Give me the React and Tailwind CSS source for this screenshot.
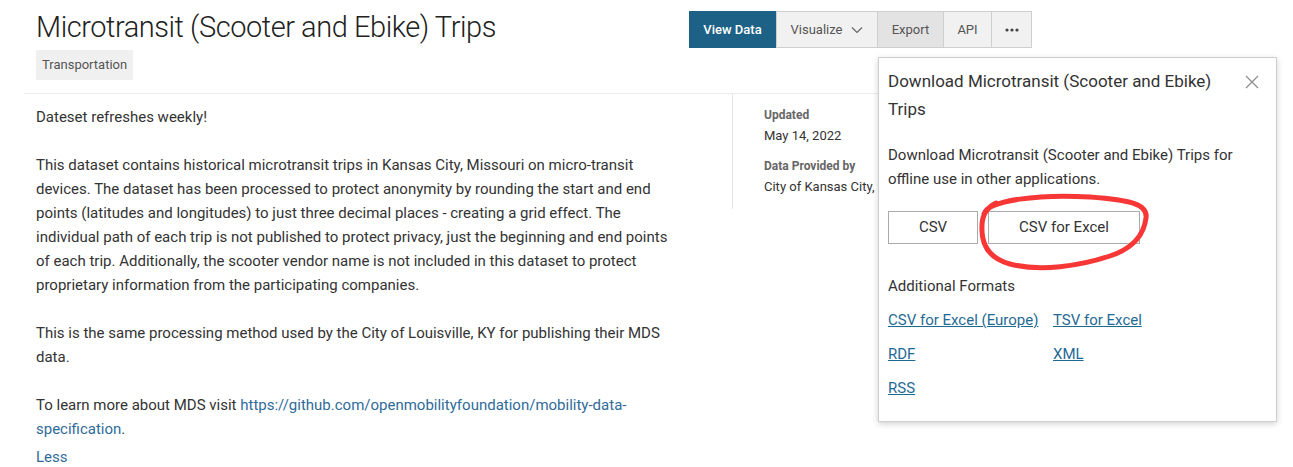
import React from "react";

function Ellipsis() {
  return (
    <svg width="14" height="4" viewBox="0 0 14 4">
      <circle cx="2" cy="2" r="1.6" fill="#444" />
      <circle cx="7" cy="2" r="1.6" fill="#444" />
      <circle cx="12" cy="2" r="1.6" fill="#444" />
    </svg>
  );
}

function Chevron() {
  return (
    <svg width="12" height="8" viewBox="0 0 12 8" className="ml-[9px]">
      <path d="M1 1.5 L6 6.5 L11 1.5" fill="none" stroke="#666" strokeWidth="1.2" />
    </svg>
  );
}

export default function App() {
  return (
    <div className="relative w-[1293px] h-[467px] overflow-hidden bg-white font-['Roboto',sans-serif] text-[#333]">
      {/* header */}
      <div className="mx-[24px] flex h-[94px] border-b border-[#ececec]">
        <div className="w-[665px] pl-[12px] pt-[9px]">
          <h1 className="text-[29px] leading-[36px] font-light tracking-[-0.45px] text-[#222] whitespace-nowrap">
            Microtransit (Scooter and Ebike) Trips
          </h1>
          <div className="mt-[5px] inline-block h-[30px] bg-[#f0f0f0] px-[6px] text-[13px] leading-[30px] text-[#555]">
            Transportation
          </div>
        </div>
        <div className="mt-[11px] flex h-[37px] text-[13px]">
          <div className="flex w-[87px] items-center justify-center bg-[#1d6186] font-medium text-white">
            View Data
          </div>
          <div className="flex w-[102px] items-center justify-center border border-[#cfcfcf] bg-[#f1f1f1] text-[#555]">
            Visualize
            <Chevron />
          </div>
          <div className="flex w-[66px] items-center justify-center border border-l-0 border-[#cfcfcf] bg-[#e3e3e3] text-[#555]">
            Export
          </div>
          <div className="flex w-[48px] items-center justify-center border border-l-0 border-[#cfcfcf] bg-[#f1f1f1] text-[#555]">
            API
          </div>
          <div className="flex w-[40px] items-center justify-center border border-l-0 border-[#cfcfcf] bg-[#f1f1f1]">
            <Ellipsis />
          </div>
        </div>
      </div>

      {/* main */}
      <div className="ml-[24px] flex">
        <div className="w-[708px] pl-[12px] pt-[11px]">
          <div className="w-[642px] text-[15px] leading-[24px] text-[#333]">
            <p>Dateset refreshes weekly!</p>
            <p className="mt-[24px]">
              This dataset contains historical microtransit trips in Kansas City, Missouri on micro-transit
              devices. The dataset has been processed to protect anonymity by rounding the start and end
              points (latitudes and longitudes) to just three decimal places - creating a grid effect. The
              individual path of each trip is not published to protect privacy, just the beginning and end points
              of each trip. Additionally, the scooter vendor name is not included in this dataset to protect
              proprietary information from the participating companies.
            </p>
            <p className="mt-[24px]">
              This is the same processing method used by the City of Louisville, KY for publishing their MDS
              data.
            </p>
            <p className="mt-[24px]">
              To learn more about MDS visit{" "}
              <span className="text-[#2f6b9a]">https://github.com/openmobilityfoundation/mobility-data-specification</span>
              .
            </p>
            <p className="mt-[4px] text-[#2f6b9a]">Less</p>
          </div>
        </div>
        <div className="h-[115px] border-l border-[#e6e6e6] pl-[31px] pt-[12px]">
          <div className="text-[12px] leading-[18px] font-bold text-[#666]">Updated</div>
          <div className="mt-[2px] text-[13px] leading-[20px] text-[#333]">May 14, 2022</div>
          <div className="mt-[11px] text-[12px] leading-[18px] font-bold text-[#666]">Data Provided by</div>
          <div className="mt-[2px] text-[13px] leading-[20px] text-[#333] whitespace-nowrap">City of Kansas City, Missouri</div>
        </div>
      </div>

      {/* export dropdown */}
      <div className="absolute left-[878px] top-[57px] h-[365px] w-[399px] border border-[#cfcfcf] bg-white pl-[9px] pt-[9px] shadow-[0_2px_6px_rgba(0,0,0,0.18)]">
        <div className="flex">
          <div className="w-[345px] text-[17px] leading-[28px] text-[#333]">
            Download Microtransit (Scooter and Ebike) Trips
          </div>
          <svg width="14" height="14" viewBox="0 0 14 14" className="ml-[12px] mt-[8px]">
            <path d="M1 1 L13 13 M13 1 L1 13" stroke="#8f8f8f" strokeWidth="1.3" />
          </svg>
        </div>
        <p className="mt-[20px] w-[370px] text-[15px] leading-[24px] text-[#333]">
          Download Microtransit (Scooter and Ebike) Trips for offline use in other applications.
        </p>
        <div className="mt-[20px] flex gap-[10px]">
          <div className="flex h-[33px] w-[90px] items-center justify-center border border-[#aaa] text-[15px] text-[#333]">
            CSV
          </div>
          <div className="flex h-[33px] w-[152px] items-center justify-center border border-[#aaa] text-[15px] text-[#333]">
            CSV for Excel
          </div>
        </div>
        <div className="mt-[30px] text-[15px] leading-[24px] text-[#333]">Additional Formats</div>
        <div className="mt-[10px] grid grid-cols-[165px_auto] gap-y-[10px] text-[15px] leading-[24px] text-[#1f6a94] underline">
          <span>CSV for Excel (Europe)</span>
          <span>TSV for Excel</span>
          <span>RDF</span>
          <span>XML</span>
          <span>RSS</span>
        </div>
      </div>

      {/* red annotation */}
      <svg className="pointer-events-none absolute left-0 top-0" width="1293" height="467">
        <path
          d="M984 214 C988 200, 1040 194, 1090 197 C1130 200, 1148 204, 1146 218 C1144 234, 1134 248, 1110 256 C1080 266, 1040 272, 1010 264 C988 258, 981 244, 982 226 C982 216, 986 208, 996 203"
          fill="none"
          stroke="#f73636"
          strokeWidth="5"
          strokeLinecap="round"
        />
      </svg>
    </div>
  );
}
